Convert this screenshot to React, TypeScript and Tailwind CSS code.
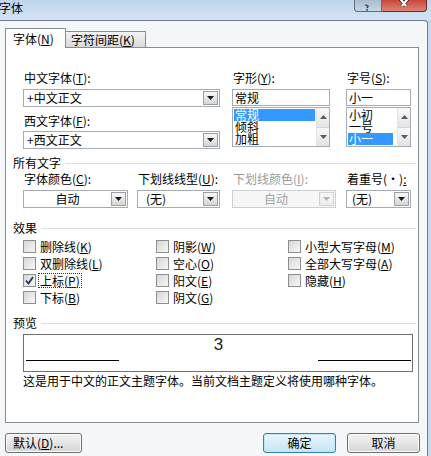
import React from "react";
import clsx from "clsx";

// Word "字体" dialog, Windows 7 look

const DropBtn = ({ disabled }: { disabled?: boolean }) => (
  <div
    className={clsx(
      "w-[15px] my-[1px] mr-[1px] border flex items-center justify-center bg-linear-to-b",
      disabled
        ? "border-[#d0d3d7] from-[#f7f7f7] to-[#ececec]"
        : "border-[#9aa0a8] from-[#f7f7f7] to-[#d5d5d5]"
    )}
  >
    <svg width="7" height="4" viewBox="0 0 7 4">
      <path d="M0 0h7L3.5 4z" fill={disabled ? "#b5b5b5" : "#1a1a1a"} />
    </svg>
  </div>
);

const Combo = ({
  className,
  children,
  center,
  disabled,
}: {
  className: string;
  children: React.ReactNode;
  center?: boolean;
  disabled?: boolean;
}) => (
  <div
    className={clsx(
      "flex h-[18px] border",
      disabled ? "border-[#cdd1d6] bg-[#f6f6f6]" : "border-[#a5acb5] bg-white",
      className
    )}
  >
    <div
      className={clsx(
        "flex-1 flex items-center px-[3px] leading-none",
        center && "justify-center",
        disabled ? "text-[#a3a3a3]" : "text-black"
      )}
    >
      {children}
    </div>
    <DropBtn disabled={disabled} />
  </div>
);

const ScrollBar = () => (
  <div className="w-[13px] flex flex-col bg-[#f0f0f0] border-l border-[#e3e3e3]">
    <div className="flex-1 flex items-center justify-center bg-linear-to-b from-[#f8f8f8] to-[#e4e4e4] border-b border-[#d6d6d6]">
      <svg width="7" height="4" viewBox="0 0 7 4">
        <path d="M0 4h7L3.5 0z" fill="#5a5a5a" />
      </svg>
    </div>
    <div className="flex-1 flex items-center justify-center bg-linear-to-b from-[#f8f8f8] to-[#e4e4e4]">
      <svg width="7" height="4" viewBox="0 0 7 4">
        <path d="M0 0h7L3.5 4z" fill="#5a5a5a" />
      </svg>
    </div>
  </div>
);

const ListBox = ({
  className,
  items,
  selected,
  selClass,
}: {
  className: string;
  items: string[];
  selected: number;
  selClass: string;
}) => (
  <div className={clsx("flex h-[40px] mt-[1px] border border-[#a5acb5] bg-white", className)}>
    <div className="flex-1 flex flex-col pt-[1px] pl-[1px] leading-[12px]">
      {items.map((it, i) => (
        <div
          key={it}
          className={clsx("h-[12px] pl-[1px]", i === selected && clsx("bg-[#3399ff] text-white", selClass))}
        >
          {it}
        </div>
      ))}
    </div>
    <ScrollBar />
  </div>
);

const Check = ({
  label,
  k,
  checked,
  focus,
}: {
  label: string;
  k: string;
  checked?: boolean;
  focus?: boolean;
}) => (
  <div className="flex items-center h-[17px]">
    <div className="w-[13px] h-[13px] border border-[#8e8f8f] bg-linear-to-br from-[#d6d6d6] to-[#f8f8f8] flex items-center justify-center">
      {checked && (
        <svg width="9" height="9" viewBox="0 0 9 9">
          <path d="M1 4.5l2.5 3L8 1" stroke="#1c3567" strokeWidth="1.8" fill="none" />
        </svg>
      )}
    </div>
    <span className={clsx("ml-[3px] leading-[13px] px-[1px]", focus && "outline outline-1 outline-dotted outline-[#333]")}>
      {label}(<u>{k}</u>)
    </span>
  </div>
);

const Header = ({ children }: { children: React.ReactNode }) => (
  <div className="flex items-center h-[14px] pl-[7px]">
    <span className="leading-[14px]">{children}</span>
    <div className="flex-1 h-px bg-[#d8dfe6] ml-[4px] mr-[2px]" />
  </div>
);

const Label = ({ children, className }: { children: React.ReactNode; className?: string }) => (
  <div className={clsx("h-[14px] leading-[14px] pl-[1px]", className)}>{children}</div>
);

const Button = ({
  children,
  className,
  primary,
}: {
  children: React.ReactNode;
  className: string;
  primary?: boolean;
}) => (
  <div
    className={clsx(
      "h-[20px] rounded-[3px] border flex items-center leading-none",
      primary
        ? "border-[#3c7fb1] bg-linear-to-b from-[#eaf6fd] to-[#c4e5f6] shadow-[inset_0_0_0_1px_#bfe6f7]"
        : "border-[#707070] bg-linear-to-b from-[#f4f4f4] to-[#d6d6d6] shadow-[inset_0_0_0_1px_#fbfbfb]",
      className
    )}
  >
    {children}
  </div>
);

export default function App() {
  return (
    <div className="w-[431px] h-[456px] overflow-hidden bg-[#c6daef] flex flex-col text-[12px] text-black font-['Noto_Sans_CJK_SC','Noto_Sans',sans-serif]">
      {/* title bar */}
      <div className="h-[20px] flex items-start bg-linear-to-b from-[#bfd5ec] to-[#d3e3f4]">
        <span className="text-[12px] leading-[14px] pt-[1px] -ml-[1px]">字体</span>
        <div className="ml-auto mr-[4px] flex">
          <div className="w-[28px] h-[12px] rounded-bl-[4px] border border-t-0 border-[#5c6f86] bg-linear-to-b from-[#a9bcd2] to-[#c9d6e4] flex items-end justify-center overflow-hidden">
            <svg width="8" height="7" viewBox="0 0 8 7">
              <path d="M1.5 0.5c0 1.5 3.5 0.8 2.2 2.6L3 4" stroke="#2b3b52" strokeWidth="1.5" fill="none" />
              <path d="M3 5.2v1.6" stroke="#2b3b52" strokeWidth="1.6" />
            </svg>
          </div>
          <div className="w-[45px] h-[12px] rounded-br-[4px] border border-t-0 border-l-0 border-[#6b2c26] bg-linear-to-b from-[#c8463a] to-[#dc8475] flex items-start justify-center overflow-hidden">
            <svg width="14" height="10" viewBox="0 0 14 10">
              <path d="M1 -4L9 6M13 -4L5 6" stroke="#3a1a16" strokeWidth="3.6" />
              <path d="M1 -4L9 6M13 -4L5 6" stroke="#ffffff" strokeWidth="2.2" />
            </svg>
          </div>
        </div>
      </div>

      {/* body */}
      <div className="flex-1 mr-[3px] bg-[#f5f6f7] border-t border-r border-[#6d7c8d] rounded-tr-[4px] flex flex-col pl-[5px] pt-[7px]">
        {/* tabs */}
        <div className="flex items-end h-[19px]">
          <div className="relative z-10 w-[61px] h-[20px] -mb-px bg-white border border-b-0 border-[#898c95] pl-[7px] pt-[3px] leading-[14px]">
            字体(<u>N</u>)
          </div>
          <div className="w-[80px] h-[16px] border border-l-0 border-b-0 border-[#898c95] bg-linear-to-b from-[#f4f4f4] to-[#d9d9d9] pl-[5px] pt-[1px] leading-[14px]">
            字符间距(<u>K</u>)
          </div>
        </div>

        {/* panel */}
        <div className="w-[414px] h-[376px] border border-[#898c95] bg-white flex flex-col">
          {/* font pickers */}
          <div className="flex pl-[17px] pt-[23px]">
            <div className="w-[197px] flex flex-col">
              <Label className="mb-[4px]">中文字体(<u>T</u>):</Label>
              <Combo className="h-[17px]">+中文正文</Combo>
              <Label className="mt-[7px] mb-[3px]">西文字体(<u>F</u>):</Label>
              <Combo className="h-[17px]">+西文正文</Combo>
            </div>
            <div className="w-[98px] ml-[12px] flex flex-col">
              <Label className="mb-[4px]">字形(<u>Y</u>):</Label>
              <div className="h-[17px] border border-[#a5acb5] pl-[2px] flex items-center">常规</div>
              <ListBox className="w-[98px]" items={["常规", "倾斜", "加粗"]} selected={0} selClass="mr-[1px]" />
            </div>
            <div className="w-[65px] ml-[16px] flex flex-col">
              <Label className="mb-[4px]">字号(<u>S</u>):</Label>
              <div className="h-[17px] border border-[#a5acb5] pl-[2px] flex items-center">小一</div>
              <ListBox className="w-[65px]" items={["小初", "一号", "小一"]} selected={2} selClass="mr-[4px]" />
            </div>
          </div>

          {/* all text */}
          <div className="mt-[7px]">
            <Header>所有文字</Header>
          </div>
          <div className="flex pl-[17px] mt-[2px]">
            <div className="w-[105px] flex flex-col">
              <Label className="mb-[4px]">字体颜色(<u>C</u>):</Label>
              <Combo className="w-[105px]" center>
                自动
              </Combo>
            </div>
            <div className="w-[83px] ml-[9px] flex flex-col">
              <Label className="mb-[4px] whitespace-nowrap">下划线线型(<u>U</u>):</Label>
              <Combo className="w-[83px]">
                <span className="pl-[5px]">(无)</span>
              </Combo>
            </div>
            <div className="w-[104px] ml-[12px] flex flex-col">
              <Label className="mb-[4px] text-[#9a9a9a] whitespace-nowrap">下划线颜色(<u>I</u>):</Label>
              <Combo className="w-[104px]" center disabled>
                自动
              </Combo>
            </div>
            <div className="w-[65px] ml-[10px] flex flex-col">
              <Label className="mb-[4px] whitespace-nowrap">着重号(·)<u>:</u></Label>
              <Combo className="w-[65px]">
                <span className="pl-[2px]">(无)</span>
              </Combo>
            </div>
          </div>

          {/* effects */}
          <div className="mt-[13px]">
            <Header>效果</Header>
          </div>
          <div className="flex pl-[17px] mt-[3px]">
            <div className="w-[133px] flex flex-col">
              <Check label="删除线" k="K" />
              <Check label="双删除线" k="L" />
              <Check label="上标" k="P" checked focus />
              <Check label="下标" k="B" />
            </div>
            <div className="w-[132px] flex flex-col">
              <Check label="阴影" k="W" />
              <Check label="空心" k="O" />
              <Check label="阳文" k="E" />
              <Check label="阴文" k="G" />
            </div>
            <div className="flex flex-col">
              <Check label="小型大写字母" k="M" />
              <Check label="全部大写字母" k="A" />
              <Check label="隐藏" k="H" />
            </div>
          </div>

          {/* preview */}
          <div className="mt-[10px]">
            <Header>预览</Header>
          </div>
          <div className="ml-[17px] mt-[4px] w-[390px] h-[38px] border border-[#6f6f6f] flex items-start">
            <div className="w-[93px] h-px bg-black mt-[25px] ml-[2px]" />
            <div className="flex-1 flex justify-center">
              <span className="text-[17px] leading-[18px] pt-[1px] text-[#222] font-['Liberation_Sans',sans-serif]">3</span>
            </div>
            <div className="w-[93px] h-px bg-black mt-[25px] mr-[1px]" />
          </div>
          <div className="pl-[17px] mt-[2px] leading-[14px]">
            这是用于中文的正文主题字体。当前文档主题定义将使用哪种字体。
          </div>
        </div>

        {/* buttons */}
        <div className="flex w-[415px] mt-[10px]">
          <Button className="w-[77px] pl-[7px]">
            默认(<u>D</u>)...
          </Button>
          <Button className="w-[73px] ml-auto justify-center" primary>
            确定
          </Button>
          <Button className="w-[73px] ml-[11px] justify-center">取消</Button>
        </div>
      </div>
    </div>
  );
}
